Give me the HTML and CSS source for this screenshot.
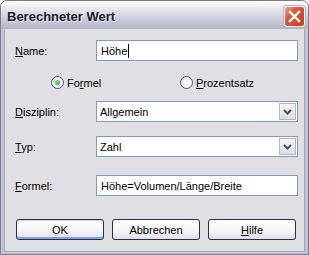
FILE: index.html
```html
<!DOCTYPE html>
<html lang="de">
<head>
    <meta charset="UTF-8">
    <title>Berechneter Wert</title>
    <link rel="stylesheet" href="styles.css">
</head>
<body>
    <div class="window">
        <div class="titlebar">
            <span class="title">Berechneter Wert</span>
            <button class="close-btn" aria-label="Schließen">
                <svg width="13" height="13" viewBox="0 0 13 13">
                    <path d="M2 2 L11 11 M11 2 L2 11" stroke="#fff" stroke-width="2.4" stroke-linecap="square"/>
                </svg>
            </button>
        </div>

        <div class="client">
            <div class="row row-name">
                <label class="label"><u>N</u>ame:</label>
                <div class="field text-field"><span>Höhe</span><span class="caret"></span></div>
            </div>

            <div class="radio-row">
                <span class="radio radio-formel"><span class="dot checked"></span><span>Fo<u>r</u>mel</span></span>
                <span class="radio radio-prozent"><span class="dot"></span><span><u>P</u>rozentsatz</span></span>
            </div>

            <div class="row row-disziplin">
                <label class="label"><u>D</u>isziplin:</label>
                <div class="field select-field">
                    <span class="value">Allgemein</span>
                    <span class="drop-btn">
                        <svg width="9" height="6" viewBox="0 0 9 6">
                            <path d="M1 1 L4.5 4.5 L8 1" fill="none" stroke="#4d4d5c" stroke-width="2"/>
                        </svg>
                    </span>
                </div>
            </div>

            <div class="row row-typ">
                <label class="label"><u>T</u>yp:</label>
                <div class="field select-field">
                    <span class="value">Zahl</span>
                    <span class="drop-btn">
                        <svg width="9" height="6" viewBox="0 0 9 6">
                            <path d="M1 1 L4.5 4.5 L8 1" fill="none" stroke="#4d4d5c" stroke-width="2"/>
                        </svg>
                    </span>
                </div>
            </div>

            <div class="row row-formel">
                <label class="label"><u>F</u>ormel:</label>
                <div class="field text-field">Höhe=Volumen/Länge/Breite</div>
            </div>

            <div class="buttons">
                <button class="btn btn-default">OK</button>
                <button class="btn">Abbrechen</button>
                <button class="btn"><u>H</u>ilfe</button>
            </div>
        </div>
    </div>
</body>
</html>
```

FILE: styles.css
```css
* {
    margin: 0;
    padding: 0;
    box-sizing: border-box;
}

body {
    width: 309px;
    height: 255px;
    overflow: hidden;
    font-family: 'Liberation Sans', Arial, sans-serif;
    font-size: 11px;
    color: #000;
    background: #fff;
}

.window {
    width: 309px;
    height: 255px;
    display: flex;
    flex-direction: column;
    background: #c4c3d4;
    border: 1px solid #7c7b92;
    border-radius: 7px 7px 0 0;
    overflow: hidden;
}

/* Title bar */
.titlebar {
    height: 28px;
    flex-shrink: 0;
    display: flex;
    align-items: center;
    justify-content: space-between;
    padding: 0 3px 0 6px;
    background: linear-gradient(#fdfdfe 0%, #ebeaf1 25%, #d3d2e0 55%, #bfbed1 85%, #b2b1c6 100%);
}

.title {
    font-family: 'Liberation Sans', Arial, sans-serif;
    font-weight: bold;
    font-size: 13px;
    color: #1a1a2c;
    text-shadow: 1px 1px 0 rgba(255, 255, 255, 0.6);
    margin-top: 3px;
}

.close-btn {
    width: 21px;
    height: 21px;
    margin-top: 3px;
    border: 1px solid #fff;
    border-radius: 3px;
    background: linear-gradient(135deg, #eb9a84 0%, #d8573a 40%, #c3401f 100%);
    box-shadow: 0 0 0 1px #b0afc4;
    display: flex;
    align-items: center;
    justify-content: center;
}

/* Client area */
.client {
    flex: 1;
    margin: 0 3px 2px 3px;
    background: #e0dfe3;
    border: 1px solid #a8a7ba;
    border-top: none;
    padding: 11px 0 0 10px;
    display: flex;
    flex-direction: column;
}

.row {
    display: flex;
    align-items: center;
    height: 21px;
}

.label {
    width: 81px;
}

.field {
    width: 202px;
    height: 21px;
    background: #fff;
    border: 1px solid #7f9db9;
    display: flex;
    align-items: center;
    padding-left: 4px;
}

.caret {
    display: inline-block;
    width: 1px;
    height: 14px;
    background: #000;
    margin-left: 1px;
}

.select-field {
    justify-content: space-between;
    padding: 1px;
    padding-left: 3px;
}

.drop-btn {
    width: 17px;
    height: 100%;
    background: linear-gradient(#f6f6f9, #dcdce6);
    border: 1px solid #b4b5c8;
    display: flex;
    align-items: center;
    justify-content: center;
}

.radio-row {
    display: flex;
    align-items: center;
    height: 15px;
    margin-top: 14px;
    padding-left: 36px;
}

.radio {
    display: flex;
    align-items: center;
    gap: 3px;
}

.radio-formel {
    width: 129px;
}

.dot {
    width: 13px;
    height: 13px;
    flex-shrink: 0;
    border: 1px solid #3d5a7c;
    border-radius: 50%;
    background: radial-gradient(circle at 65% 65%, #fff 20%, #dcdce4 100%);
    display: flex;
    align-items: center;
    justify-content: center;
}

.dot.checked::after {
    content: '';
    width: 5px;
    height: 5px;
    border-radius: 50%;
    background: radial-gradient(circle at 35% 35%, #7fe27f, #22a522);
}

.row-disziplin {
    margin-top: 11px;
}

.row-typ {
    margin-top: 14px;
}

.row-formel {
    margin-top: 18px;
}

.buttons {
    display: flex;
    gap: 8px;
    margin-top: 23px;
    margin-left: 1px;
}

.btn {
    width: 88px;
    height: 21px;
    font-family: 'Liberation Sans', Arial, sans-serif;
    font-size: 11px;
    color: #000;
    border: 1px solid #1f2f5a;
    border-radius: 3px;
    background: linear-gradient(#ffffff 0%, #f4f4f6 60%, #e2e1e8 100%);
}

.btn-default {
    box-shadow: inset 0 -2px 0 #86a4dc, inset 0 1px 0 #cfdcf5;
}
```
